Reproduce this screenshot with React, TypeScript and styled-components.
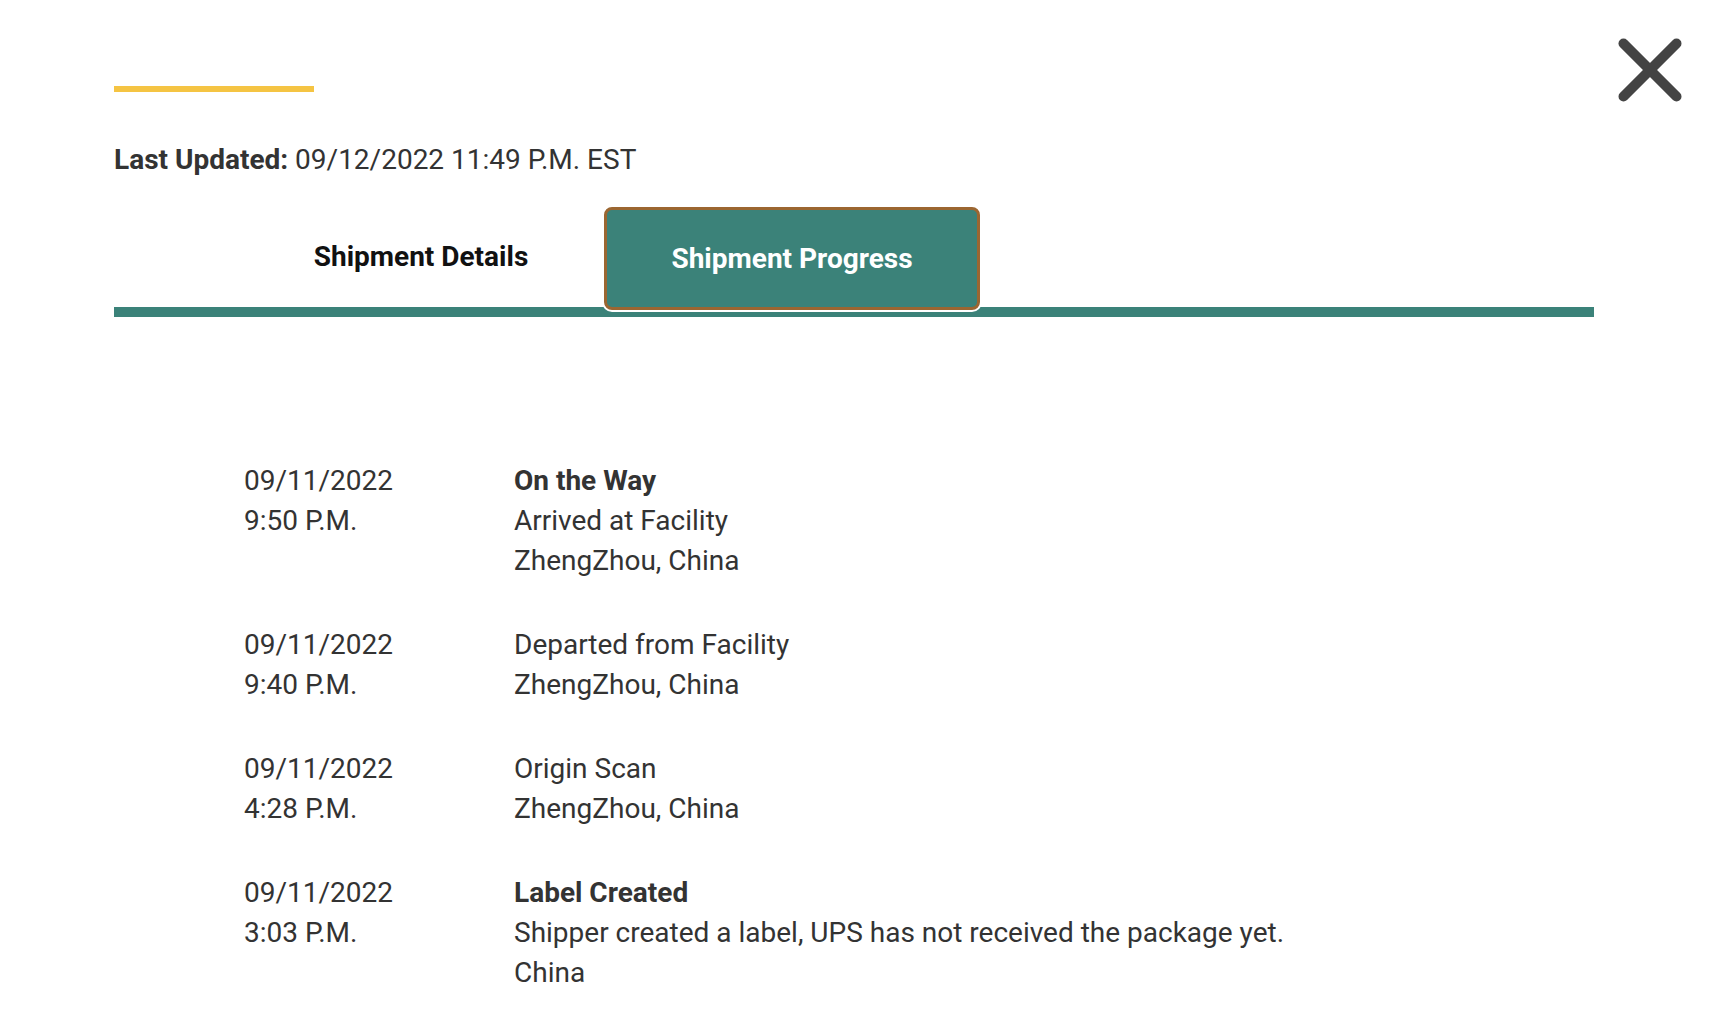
import React from "react";
import styled, { createGlobalStyle } from "styled-components";

const GlobalStyle = createGlobalStyle`
  html, body {
    margin: 0;
    padding: 0;
    background: #ffffff;
  }
  body {
    font-family: Roboto, "Noto Sans", "Liberation Sans", sans-serif;
    color: #333333;
  }
  * { box-sizing: border-box; }
`;

const Page = styled.div`
  position: relative;
  width: 1712px;
  min-height: 1020px;
  padding: 86px 118px 0 114px;
  background: #ffffff;
`;

const AccentBar = styled.div`
  width: 200px;
  height: 6px;
  background: #f5c443;
`;

const Updated = styled.p`
  margin: 48px 0 0;
  font-size: 28px;
  line-height: 40px;
  color: #333333;
`;

const Strong = styled.span`
  font-weight: 700;
`;

const TabBar = styled.div`
  display: flex;
  align-items: flex-end;
  margin-top: 27px;
  padding-left: 124px;
  height: 110px;
  border-bottom: 10px solid #3b8279;
`;

const Tab = styled.button<{ $active?: boolean }>`
  position: relative;
  z-index: 1;
  display: flex;
  align-items: center;
  justify-content: center;
  width: ${(p) => (p.$active ? "376px" : "366px")};
  height: 103px;
  margin-bottom: -3px;
  padding: 0 0 ${(p) => (p.$active ? "0" : "4px")};
  font-family: Roboto, "Noto Sans", "Liberation Sans", sans-serif;
  font-size: 28px;
  line-height: 40px;
  font-weight: 700;
  cursor: pointer;
  color: ${(p) => (p.$active ? "#ffffff" : "#111111")};
  background: ${(p) => (p.$active ? "#3b8279" : "transparent")};
  border: ${(p) => (p.$active ? "3px solid #9b6631" : "3px solid transparent")};
  border-radius: 8px;
  box-shadow: ${(p) => (p.$active ? "0 0 0 2px #ffffff" : "none")};
`;

const Timeline = styled.div`
  display: flex;
  flex-direction: column;
  gap: 44px;
  margin-top: 144px;
  padding-left: 130px;
`;

const Event = styled.div`
  display: grid;
  grid-template-columns: 270px 1fr;
  font-size: 28px;
  line-height: 40px;
  color: #333333;
`;

const Col = styled.div`
  display: flex;
  flex-direction: column;
`;

const Line = styled.span<{ $bold?: boolean }>`
  font-weight: ${(p) => (p.$bold ? 700 : 400)};
`;

const CloseButton = styled.button`
  position: absolute;
  top: 38px;
  right: 30px;
  width: 64px;
  height: 64px;
  padding: 0;
  border: none;
  background: transparent;
  cursor: pointer;
  display: block;
`;

type Ev = { date: string; time: string; title?: string; lines: string[] };

const events: Ev[] = [
  {
    date: "09/11/2022",
    time: "9:50 P.M.",
    title: "On the Way",
    lines: ["Arrived at Facility", "ZhengZhou, China"],
  },
  {
    date: "09/11/2022",
    time: "9:40 P.M.",
    lines: ["Departed from Facility", "ZhengZhou, China"],
  },
  {
    date: "09/11/2022",
    time: "4:28 P.M.",
    lines: ["Origin Scan", "ZhengZhou, China"],
  },
  {
    date: "09/11/2022",
    time: "3:03 P.M.",
    title: "Label Created",
    lines: ["Shipper created a label, UPS has not received the package yet.", "China"],
  },
];

export default function App() {
  return (
    <>
      <GlobalStyle />
      <Page>
        <CloseButton aria-label="Close">
          <svg width="64" height="64" viewBox="0 0 64 64">
            <line x1="5.5" y1="5.5" x2="58.5" y2="58.5" stroke="#444444" strokeWidth="10" strokeLinecap="round" />
            <line x1="58.5" y1="5.5" x2="5.5" y2="58.5" stroke="#444444" strokeWidth="10" strokeLinecap="round" />
          </svg>
        </CloseButton>
        <AccentBar />
        <Updated>
          <Strong>Last Updated:</Strong> 09/12/2022 11:49 P.M. EST
        </Updated>
        <TabBar>
          <Tab>Shipment Details</Tab>
          <Tab $active>Shipment Progress</Tab>
        </TabBar>
        <Timeline>
          {events.map((e, i) => (
            <Event key={i}>
              <Col>
                <Line>{e.date}</Line>
                <Line>{e.time}</Line>
              </Col>
              <Col>
                {e.title && <Line $bold>{e.title}</Line>}
                {e.lines.map((l, j) => (
                  <Line key={j}>{l}</Line>
                ))}
              </Col>
            </Event>
          ))}
        </Timeline>
      </Page>
    </>
  );
}
